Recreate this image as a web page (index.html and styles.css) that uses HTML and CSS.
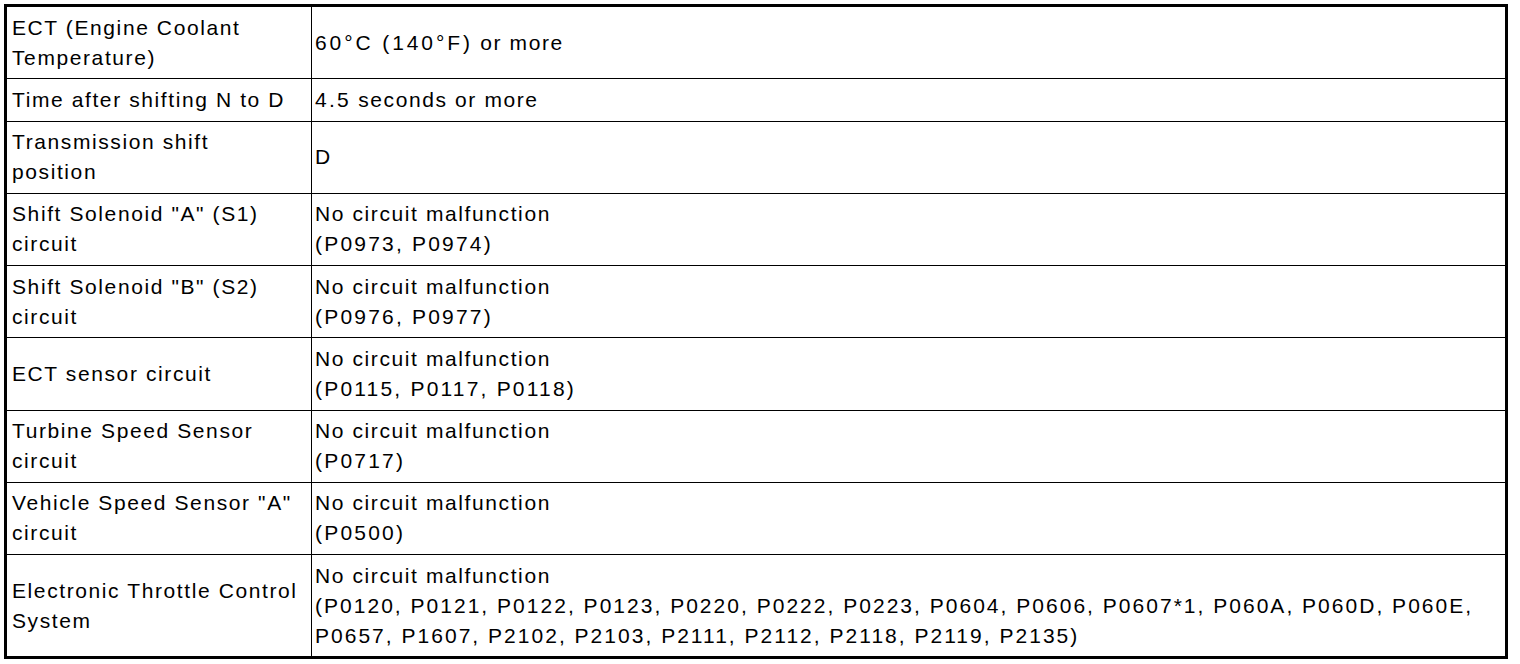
FILE: index.html
```html
<!DOCTYPE html>
<html lang="en">
<head>
<meta charset="utf-8">
<title>Conditions</title>
<link rel="stylesheet" href="styles.css">
</head>
<body>
<div class="frame">
<table class="cond">
<tr><td class="lbl">ECT (Engine Coolant Temperature)</td><td class="val"><span class="temp">60°C (140°F)</span> or more</td></tr>
<tr><td class="lbl">Time after shifting N to D</td><td class="val"><span class="codes">4.5</span> seconds or more</td></tr>
<tr><td class="lbl">Transmission shift<br>position</td><td class="val">D</td></tr>
<tr><td class="lbl">Shift Solenoid "A" (S1) circuit</td><td class="val">No circuit malfunction<br><span class="codes">(P0973, P0974)</span></td></tr>
<tr><td class="lbl">Shift Solenoid "B" (S2) circuit</td><td class="val">No circuit malfunction<br><span class="codes">(P0976, P0977)</span></td></tr>
<tr><td class="lbl">ECT sensor circuit</td><td class="val">No circuit malfunction<br><span class="codes">(P0115, P0117, P0118)</span></td></tr>
<tr><td class="lbl">Turbine Speed Sensor circuit</td><td class="val">No circuit malfunction<br><span class="codes">(P0717)</span></td></tr>
<tr><td class="lbl">Vehicle Speed Sensor "A" circuit</td><td class="val">No circuit malfunction<br><span class="codes">(P0500)</span></td></tr>
<tr><td class="lbl">Electronic Throttle Control System</td><td class="val">No circuit malfunction<br><span class="codes long">(P0120, P0121, P0122, P0123, P0220, P0222, P0223, P0604, P0606, P0607*1, P060A, P060D, P060E,<br>P0657, P1607, P2102, P2103, P2111, P2112, P2118, P2119, P2135)</span></td></tr>
</table>
</div>
</body>
</html>
```

FILE: styles.css
```css
html, body {
  margin: 0;
  padding: 0;
  background: #fff;
}
body {
  padding: 4px 0 0 4px;
  font-family: "Liberation Sans", Arial, sans-serif;
  font-size: 21px;
  line-height: 30px;
  letter-spacing: 1.6px;
  color: #000;
}
.frame {
  width: 1498px;
  border: 3px solid #000;
}
.cond {
  width: 100%;
  border-collapse: separate;
  border-spacing: 0;
  table-layout: fixed;
}
.cond td {
  padding: 5.5px 0 5.75px 0;
  vertical-align: middle;
  border-bottom: 1px solid #000;
}
.cond tr:last-child td {
  border-bottom: none;
}
.cond .lbl {
  width: 299px;
  padding-left: 5px;
  border-right: 1px solid #000;
}
.cond .val {
  padding-left: 3px;
}
.codes {
  letter-spacing: 2.2px;
}
.codes.long {
  letter-spacing: 2.02px;
}
.temp {
  letter-spacing: 2.9px;
}
```
